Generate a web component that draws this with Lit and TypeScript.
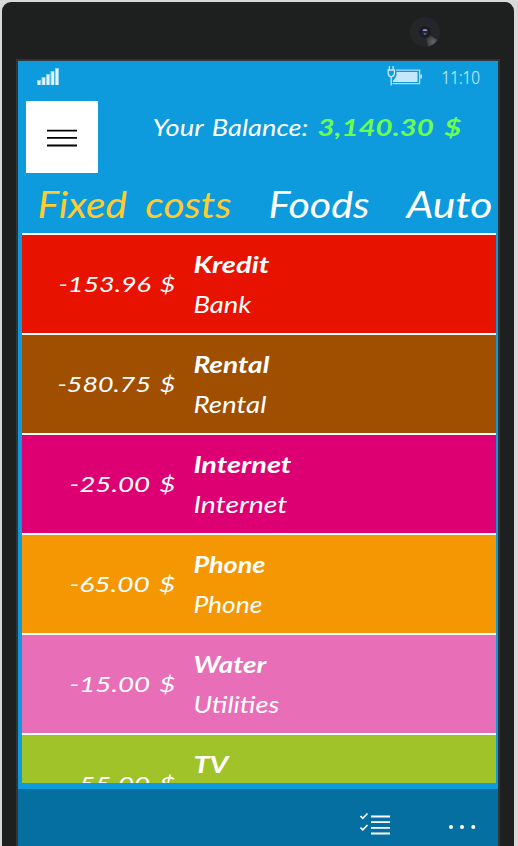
import { LitElement, html, svg, css, nothing } from "lit";
import { customElement, property } from "lit/decorators.js";

interface Cost {
  amount: string;
  amountWidth: number;
  title: string;
  titleWidth: number;
  note?: string;
  noteWidth?: number;
  color: string;
}

const COSTS: Cost[] = [
  { amount: "-153.96 $", amountWidth: 117, title: "Kredit", titleWidth: 76, note: "Bank", noteWidth: 58, color: "#e81200" },
  { amount: "-580.75 $", amountWidth: 118, title: "Rental", titleWidth: 76, note: "Rental", noteWidth: 73, color: "#a04f00" },
  { amount: "-25.00 $", amountWidth: 106, title: "Internet", titleWidth: 98, note: "Internet", noteWidth: 94, color: "#dc0073" },
  { amount: "-65.00 $", amountWidth: 106, title: "Phone", titleWidth: 72, note: "Phone", noteWidth: 69, color: "#f59703" },
  { amount: "-15.00 $", amountWidth: 106, title: "Water", titleWidth: 73, note: "Utilities", noteWidth: 86, color: "#e86eb8" },
  { amount: "-55.00 $", amountWidth: 106, title: "TV", titleWidth: 35, color: "#a1c32a" },
];

/* One line of slanted lettering, set to an exact width. */
@customElement("script-line")
export class ScriptLine extends LitElement {
  @property() text = "";
  @property({ type: Number }) span = 100;
  @property({ type: Number }) size = 23;
  @property({ type: Number }) weight = 400;

  static styles = css`
    :host {
      display: block;
      flex: none;
      word-spacing: 2px;
    }
    svg {
      display: block;
      overflow: visible;
    }
    text {
      font-family: Lato, "Open Sans", sans-serif;
      font-style: italic;
      fill: currentColor;
    }
  `;

  render() {
    const h = 40;
    return html`<svg width=${this.span} height=${h}>
      ${svg`<text x="-0.6" y="28" font-size=${this.size} font-weight=${this.weight}
        textLength=${this.span} lengthAdjust="spacingAndGlyphs">${this.text}</text>`}
    </svg>`;
  }
}

@customElement("cost-row")
export class CostRow extends LitElement {
  @property({ attribute: false }) cost!: Cost;

  static styles = css`
    :host {
      display: block;
      color: #fff;
    }
    .row {
      box-sizing: border-box;
      height: 100px;
      border-top: 2px solid #fff;
      display: grid;
      grid-template-columns: 154px 1fr;
      column-gap: 18px;
    }
    .amount {
      display: flex;
      justify-content: flex-end;
      padding-top: 28.5px;
    }
    .labels {
      display: flex;
      flex-direction: column;
      padding-top: 9.5px;
    }
  `;

  render() {
    const c = this.cost;
    return html`<div class="row" style="background:${c.color}">
      <div class="amount"><script-line .text=${c.amount} .span=${c.amountWidth} .size=${21}></script-line></div>
      <div class="labels">
        <script-line .text=${c.title} .span=${c.titleWidth} .size=${23.5} .weight=${700}></script-line>
        ${c.note ? html`<script-line .text=${c.note} .span=${c.noteWidth} .size=${23.5}></script-line>` : nothing}
      </div>
    </div>`;
  }
}

@customElement("app-root")
export class AppRoot extends LitElement {
  static styles = css`
    :host {
      display: block;
      width: 518px;
      height: 846px;
      overflow: hidden;
      background: #d9d9d9;
    }
    * {
      box-sizing: border-box;
    }
    svg {
      display: block;
      flex: none;
    }
    .stage {
      height: 846px;
      padding: 2px 4px 0 2px;
    }
    .phone {
      height: 844px;
      padding: 0 14px;
      background: #1e201f;
      border-radius: 9px 9px 0 0;
      display: flex;
      flex-direction: column;
    }
    .bezel {
      height: 57px;
      display: flex;
      justify-content: flex-end;
      padding: 15px 60px 0 0;
      flex: none;
    }
    .screen {
      flex: 1;
      border: 2px solid #333436;
      border-bottom: 0;
      background: #0d9bde;
      display: flex;
      flex-direction: column;
      overflow: hidden;
    }
    .status {
      height: 40px;
      display: flex;
      align-items: flex-start;
      padding: 5px 14px 0 19px;
      color: #c9e9fa;
      flex: none;
    }
    .spacer {
      flex: 1;
    }
    .clock {
      margin: 0 0 0 18px;
      overflow: visible;
    }
    .clock text {
      font: 300 19px "Open Sans", sans-serif;
      fill: #d3eefb;
      stroke: #d3eefb;
      stroke-width: 0.2px;
    }
    .head {
      height: 72px;
      padding-left: 8px;
      display: flex;
      color: #fff;
      flex: none;
    }
    .menu {
      width: 72px;
      height: 72px;
      padding: 28px 21px;
      background: #fff;
      border: 0;
      margin-right: 55px;
    }
    .balance {
      display: flex;
      gap: 9px;
      padding-top: 7.4px;
    }
    .value {
      color: #6cff4b;
      word-spacing: 3px;
    }
    .tabs {
      height: 60px;
      display: flex;
      padding: 17.4px 0 0 20px;
      color: #fff;
      flex: none;
    }
    .active {
      color: #ffcb2e;
      word-spacing: 8px;
    }
    .foods {
      margin: 0 37px 0 37px;
    }
    .list {
      height: 550px;
      margin: 0 2px 0 4px;
      overflow: hidden;
      flex: none;
    }
    .commands {
      flex: 1;
      margin-top: 6px;
      background: #066fa1;
      display: flex;
      justify-content: flex-end;
      align-items: flex-start;
      gap: 58px;
      padding: 23px 22px 0 0;
    }
  `;

  private camera() {
    return html`<svg width="30" height="30" viewBox="0 0 30 30">
      <defs>
        <radialGradient id="glint" cx="23" cy="25" r="9" gradientUnits="userSpaceOnUse">
          <stop offset="0" stop-color="#66666a" />
          <stop offset="1" stop-color="#29292c" />
        </radialGradient>
      </defs>
      <circle cx="15" cy="15" r="15" fill="#25262a" />
      <path d="M15 15L27.5 23A15 15 0 0 1 18 29.7Z" fill="url(#glint)" />
      <circle cx="15" cy="15" r="6" fill="#1c1c20" />
      <circle cx="15" cy="15" r="3" fill="#24243f" />
      <path d="M12.5 14a2.5 2 0 0 1 5 0z" fill="#8790c4" />
      <path d="M13.5 16.3h3l-1 1.4h-1z" fill="#24a596" />
    </svg>`;
  }

  private signal() {
    return html`<svg width="22" height="20" viewBox="0 0 22 20" fill="#8fd2f3">
      <path d="M0 14h4v5H0zM4.5 11h4v8h-4zM9 8h4v11H9zM13.5 5h4v14h-4zM18 2h4v17h-4z" />
      <path fill="#dff4fd" d="M1 15h2v4H1zM5.5 12h2.5v7H5.5zM10 9h2v10h-2zM14.5 6h2.5v13h-2.5zM19 3h2v16h-2z" />
    </svg>`;
  }

  private battery() {
    return html`<svg width="35" height="20" viewBox="0 0 35 20">
      <path d="M9 4.1H32.6V17.7H5.5" fill="none" stroke="#a8dcf7" stroke-width="1.3" />
      <path d="M9.5 6H30.5V16H6V14.5Q9 12 9.5 9Z" fill="#c4e7fa" />
      <path d="M33.3 8.5h1.6v4h-1.6z" fill="#c9e9fa" />
      <path d="M2.4 0V4M6.1 0V4M4.2 11V19.5" fill="none" stroke="#c9e9fa" stroke-width="1.3" />
      <path d="M.6 4H8M1.2 4V7.3Q1.4 10.5 4.2 10.8Q7.2 10.5 7.4 7.3V4" fill="none" stroke="#c9e9fa" stroke-width="1.3" />
    </svg>`;
  }

  render() {
    return html`<div class="stage"><div class="phone">
      <div class="bezel">${this.camera()}</div>
      <div class="screen">
        <div class="status">
          ${this.signal()}
          <div class="spacer"></div>
          ${this.battery()}
          <svg class="clock" width="44" height="30">
            <text x="1.5" y="18" textLength="38.5" lengthAdjust="spacingAndGlyphs">11:10</text>
          </svg>
        </div>
        <div class="head">
          <button class="menu" aria-label="Menu">
            <svg width="30" height="20" viewBox="0 0 30 20">
              <path d="M0 .7h30v1.8H0zM0 8.1h30v1.7H0zM0 15.6h30v1.8H0z" fill="#000" />
            </svg>
          </button>
          <div class="balance">
            <script-line .text=${"Your Balance:"} .span=${156} .size=${23.5}></script-line>
            <script-line class="value" .text=${"3,140.30 $"} .span=${144} .size=${22} .weight=${700}></script-line>
          </div>
        </div>
        <div class="tabs">
          <script-line class="active" .text=${"Fixed costs"} .span=${194} .size=${37}></script-line>
          <script-line class="foods" .text=${"Foods"} .span=${101} .size=${37}></script-line>
          <script-line .text=${"Auto"} .span=${86} .size=${37}></script-line>
        </div>
        <div class="list">${COSTS.map((c) => html`<cost-row .cost=${c}></cost-row>`)}</div>
        <div class="commands">
          <svg width="30" height="24" viewBox="0 0 30 24" fill="none" stroke="#fff">
            <path d="M.5 4l2.3 2.3L7.5 1.5M.5 15.5l2.3 2.3L7.5 13" stroke-width="1.6" />
            <path d="M11 4.5h19M11 10.2h19M11 15.8h19M11 21.5h19" stroke-width="1.8" />
          </svg>
          <svg width="28" height="24" viewBox="0 0 28 24" fill="#fff">
            <circle cx="3" cy="15" r="2" /><circle cx="14" cy="15" r="2" /><circle cx="25.3" cy="15" r="2" />
          </svg>
        </div>
      </div>
    </div></div>`;
  }
}
